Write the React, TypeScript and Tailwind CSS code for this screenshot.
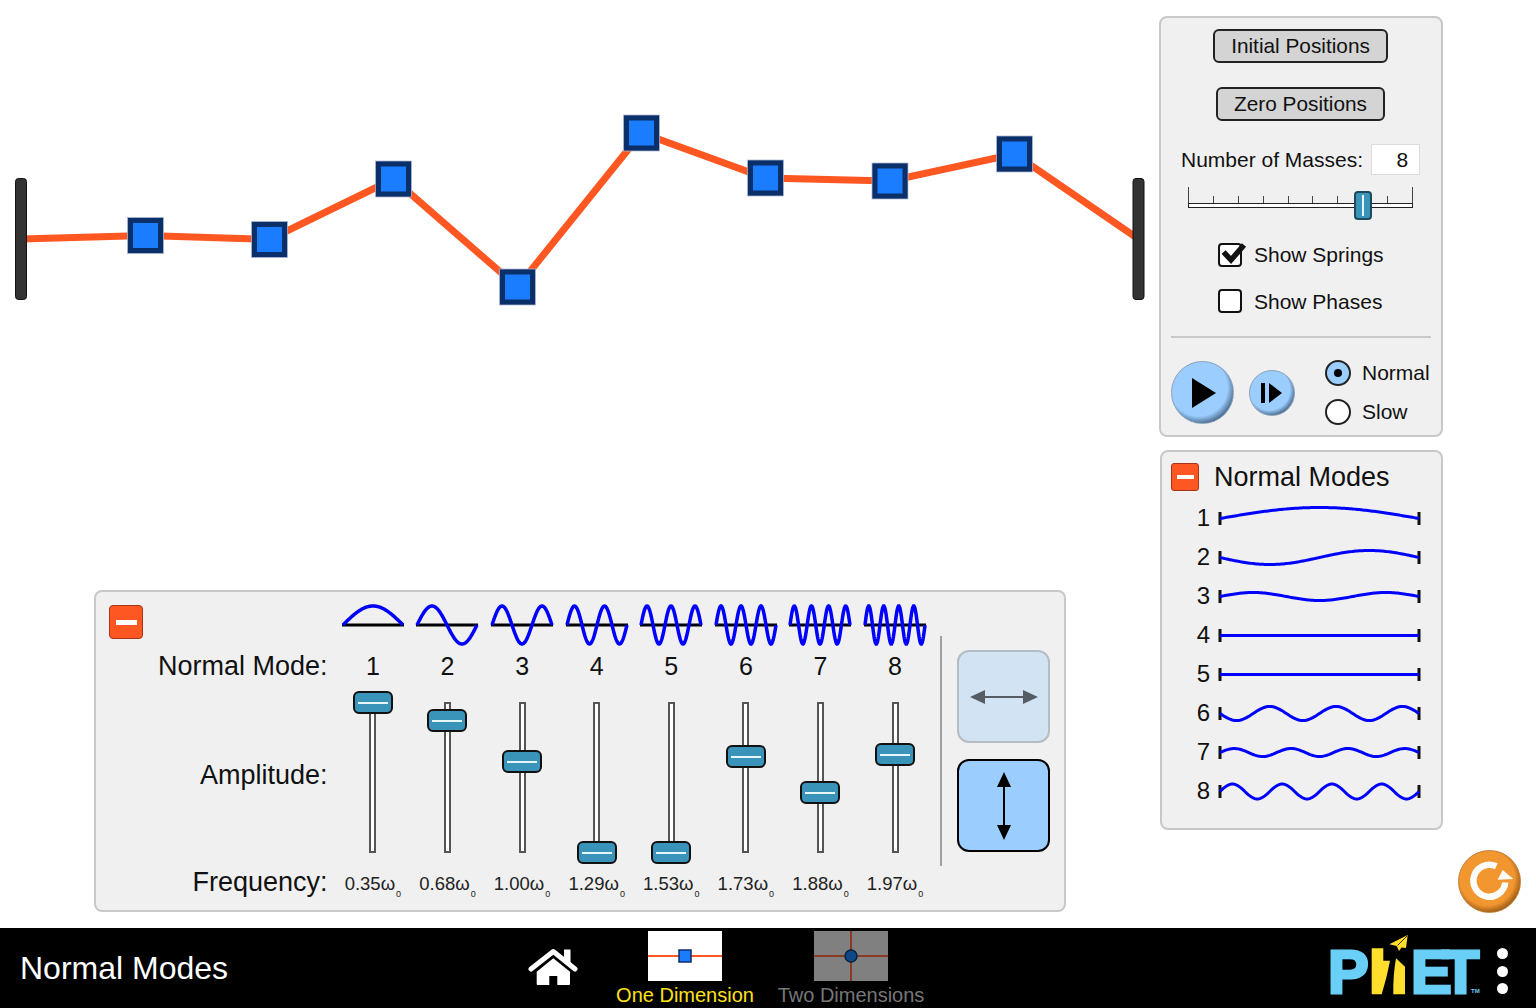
import clsx from "clsx";

const masses = [
  [145.5, 235.5],
  [269.5, 239.5],
  [393.5, 179],
  [517.5, 287],
  [641.5, 133],
  [765.5, 178],
  [890, 181],
  [1014.5, 154],
];

const modes = [
  { n: 1, freq: "0.35", thumb: 0 },
  { n: 2, freq: "0.68", thumb: 18 },
  { n: 3, freq: "1.00", thumb: 59 },
  { n: 4, freq: "1.29", thumb: 150 },
  { n: 5, freq: "1.53", thumb: 150 },
  { n: 6, freq: "1.73", thumb: 54 },
  { n: 7, freq: "1.88", thumb: 90 },
  { n: 8, freq: "1.97", thumb: 52 },
];

// amplitude of each mode in the little list on the right, negative dips first
const listAmps = [11, -7, 4, 0, 0, -7, 4, 7.5];

function wavePath(mode: number, width: number, amp: number, x0: number, y0: number) {
  const pts: string[] = [];
  for (let i = 0; i <= 120; i++) {
    const t = i / 120;
    const y = y0 - amp * Math.sin(mode * Math.PI * t);
    pts.push(`${(x0 + t * width).toFixed(2)},${y.toFixed(2)}`);
  }
  return "M" + pts.join("L");
}

function MinusButton({ size }: { size: "sm" | "lg" }) {
  return (
    <div
      className={clsx(
        "flex items-center justify-center border border-[#a8341a] bg-[#ff5722]",
        size === "lg" ? "h-[34px] w-[34px] rounded-[4px]" : "h-[28px] w-[28px] rounded-[3px]",
      )}
    >
      <div className={clsx("bg-white", size === "lg" ? "h-[5px] w-[21px]" : "h-[4px] w-[17px]")} />
    </div>
  );
}

function Chain() {
  const line = [[21, 239], ...masses, [1138.5, 239]].map((p) => p.join(",")).join(" ");
  return (
    <svg width="1159" height="330" className="block">
      <polyline points={line} fill="none" stroke="#ff5722" strokeWidth="7" />
      <rect x="15.5" y="178.5" width="11" height="121" rx="3" fill="#333" stroke="#111" />
      <rect x="1133" y="178.5" width="11" height="121" rx="3" fill="#333" stroke="#111" />
      {masses.map(([x, y]) => (
        <g key={x}>
          <rect x={x - 18} y={y - 18} width="36" height="36" fill="#0b2f68" stroke="#aebbd6" strokeWidth="0.75" />
          <rect x={x - 12.5} y={y - 12.5} width="25" height="25" fill="#1a7cff" />
        </g>
      ))}
    </svg>
  );
}

function ModeSlider({ top }: { top: number }) {
  return (
    <div className="relative mx-auto mt-[20px] h-[151px] w-[7px] border-2 border-[#555] bg-white">
      <div
        className="absolute left-[-18.5px] flex h-[23px] w-[40px] items-center justify-center rounded-[6px] border-2 border-[#111] bg-[#3a93b9]"
        style={{ top: top - 13 }}
      >
        <div className="h-[2px] w-[30px] bg-[#e6f6fb]" />
      </div>
    </div>
  );
}

function AmplitudePanel() {
  return (
    <div className="ml-[94px] mt-[260px] flex h-[322px] w-[972px] rounded-[8px] border-2 border-[#c8c8c8] bg-[#f0f0f0]">
      <div className="grid w-[837px] grid-cols-[239.6px_repeat(8,74.6px)] grid-rows-[58px_32px_184px_32px]">
        <div className="pl-[13px] pt-[13px]">
          <MinusButton size="lg" />
        </div>
        {modes.map((m) => (
          <div key={m.n} className="flex justify-center pt-[12px]">
            <svg width="66" height="44" className="block">
              <path d="M2 21H64" stroke="#000" strokeWidth="3" fill="none" />
              <path d={wavePath(m.n, 60, 19, 3, 21)} stroke="#0000ff" strokeWidth="3.5" fill="none" />
            </svg>
          </div>
        ))}

        <div className="flex items-center justify-end pr-[8px] text-[27px]">Normal Mode:</div>
        {modes.map((m) => (
          <div key={m.n} className="flex items-center justify-center pt-[2px] text-[25px]">
            {m.n}
          </div>
        ))}

        <div className="flex items-center justify-end pr-[8px] pt-[2px] text-[27px]">Amplitude:</div>
        {modes.map((m) => (
          <div key={m.n}>
            <ModeSlider top={m.thumb} />
          </div>
        ))}

        <div className="flex items-center justify-end pr-[8px] text-[27px]">Frequency:</div>
        {modes.map((m) => (
          <div key={m.n} className="flex items-center justify-center pt-[3px] text-[18.5px] text-[#222]">
            <span>
              {m.freq}ω<sub className="bottom-[-7px] ml-px text-[9px]">0</sub>
            </span>
          </div>
        ))}
      </div>

      <div className="ml-[7px] mt-[44px] h-[230px] w-[2px] bg-[#a0a0a0]" />

      <div className="ml-[15px] mt-[58px] flex flex-col gap-[16px]">
        <div className="flex h-[93px] w-[93px] items-center justify-center rounded-[12px] border-2 border-[#b4bcc4] bg-[#d2e3f3]">
          <svg width="70" height="20">
            <path d="M1 10L16 3V17Z M69 10L54 3V17Z" fill="#555c63" />
            <path d="M14 10H56" stroke="#555c63" strokeWidth="2" />
          </svg>
        </div>
        <div className="flex h-[93px] w-[93px] items-center justify-center rounded-[12px] border-2 border-black bg-[#9ccdff]">
          <svg width="20" height="70">
            <path d="M10 1L3 16H17Z M10 69L3 54H17Z" fill="#000" />
            <path d="M10 14V56" stroke="#000" strokeWidth="2" />
          </svg>
        </div>
      </div>
    </div>
  );
}

function CheckRow({ label, checked, gap }: { label: string; checked?: boolean; gap: string }) {
  return (
    <div className={clsx("ml-[57px] flex h-[24px] items-center", gap)}>
      <div className="relative h-[24px] w-[24px] rounded-[4px] border-2 border-[#111] bg-white">
        {checked && (
          <svg width="30" height="26" className="absolute left-0 top-[-5px]">
            <path d="M3.6 12L11 20L24 5" fill="none" stroke="#111" strokeWidth="5.5" />
          </svg>
        )}
      </div>
      <span className={clsx("text-[21px]", !checked && "mt-[2px]")}>{label}</span>
    </div>
  );
}

function Radio({ label, selected }: { label: string; selected?: boolean }) {
  return (
    <div className="flex h-[26px] items-center gap-[11px]">
      <div
        className={clsx(
          "flex h-[26px] w-[26px] items-center justify-center rounded-full border-2 border-[#222]",
          selected ? "bg-[#9ccdff]" : "bg-white",
        )}
      >
        {selected && <div className="h-[8px] w-[8px] rounded-full bg-black" />}
      </div>
      <span className="text-[21px]">{label}</span>
    </div>
  );
}

function ControlPanel() {
  const ticks = [0, 1, 2, 3, 4, 5, 6, 7, 8, 9];
  return (
    <div className="flex h-[421px] w-[284px] flex-col rounded-[8px] border-2 border-[#c8c8c8] bg-[#f0f0f0]">
      <div className="ml-[52px] mt-[11px] flex h-[34px] w-[175px] items-center justify-center rounded-[6px] border-2 border-[#222] bg-[#d4d4d4] text-[20.8px]">
        Initial Positions
      </div>
      <div className="ml-[55px] mt-[24px] flex h-[34px] w-[169px] items-center justify-center rounded-[6px] border-2 border-[#222] bg-[#d4d4d4] text-[20.8px]">
        Zero Positions
      </div>

      <div className="ml-[20px] mt-[23px] flex h-[31px] items-center gap-[8px]">
        <span className="text-[21px]">Number of Masses:</span>
        <div className="flex h-[31px] w-[49px] items-center justify-end border border-[#dcdcdc] bg-white pr-[11px] text-[21px]">
          8
        </div>
      </div>

      <div className="relative ml-[27px] mt-[12px] h-[21px] w-[225px]">
        <div className="flex h-[16px] items-end justify-between">
          {ticks.map((t) => (
            <div key={t} className={clsx("w-px bg-[#444]", t === 0 || t === 9 ? "h-[16px]" : "h-[7px]")} />
          ))}
        </div>
        <div className="h-[5px] border border-[#222] bg-white" />
        <div className="absolute left-[166px] top-[4px] flex h-[29px] w-[18px] items-center justify-center rounded-[4px] border-2 border-[#1d4a5c] bg-[#3a93b9]">
          <div className="h-[21px] w-[2px] bg-[#e6f6fb]" />
        </div>
      </div>

      <div className="mt-[35px]">
        <CheckRow label="Show Springs" checked gap="gap-[12px]" />
      </div>
      <div className="mt-[22px]">
        <CheckRow label="Show Phases" gap="gap-[12px]" />
      </div>

      <div className="mx-[10px] mt-[23px] h-[2px] bg-[#c8c8c8]" />

      <div className="flex">
        <div className="ml-[10px] mt-[23px] flex h-[63px] w-[63px] items-center justify-center rounded-full border border-[#8aa2ba] bg-[radial-gradient(circle_at_44%_42%,#9ccdff_0%,#9ccdff_58%,#3f5f80_76%)]">
          <svg width="26" height="32" className="ml-[3px]">
            <path d="M1 1L25 16L1 31Z" fill="#000" />
          </svg>
        </div>
        <div className="ml-[15px] mt-[32px] flex h-[46px] w-[46px] items-center justify-center rounded-full border border-[#8aa2ba] bg-[radial-gradient(circle_at_44%_42%,#9ccdff_0%,#9ccdff_58%,#3f5f80_76%)]">
          <svg width="22" height="20">
            <rect x="0" y="0" width="4" height="20" fill="#000" />
            <path d="M8 0L21 10L8 20Z" fill="#000" />
          </svg>
        </div>
        <div className="ml-[30px] mt-[22px] flex flex-col gap-[13px]">
          <Radio label="Normal" selected />
          <Radio label="Slow" />
        </div>
      </div>
    </div>
  );
}

function ModesList() {
  return (
    <div className="ml-px mt-[13px] h-[380px] w-[283px] rounded-[8px] border-2 border-[#c8c8c8] bg-[#f0f0f0]">
      <div className="ml-[9px] mt-[11px] flex items-center gap-[15px]">
        <MinusButton size="sm" />
        <span className="text-[27px] leading-[28px]">Normal Modes</span>
      </div>
      <div className="mt-[7.5px]">
        {modes.map((m, i) => (
          <div key={m.n} className="flex h-[39px] items-center">
            <div className="w-[48px] text-right text-[24px]">{m.n}</div>
            <svg width="206" height="39" className="ml-[7px] block">
              <path d="M3 13V26 M202 13V26" stroke="#111" strokeWidth="3" />
              <path d={wavePath(m.n, 199, listAmps[i], 3, 19.5)} fill="none" stroke="#0000ff" strokeWidth="3" />
            </svg>
          </div>
        ))}
      </div>
    </div>
  );
}

function ResetButton() {
  return (
    <div className="flex h-[63px] w-[63px] items-center justify-center rounded-full border border-[#c08038] bg-[radial-gradient(circle_at_46%_44%,#f2962f_0%,#f2962f_58%,#8f5412_76%)]">
      <svg width="50" height="50" viewBox="-25 -25 50 50">
        <path d="M6.3 -15.7A16 16 0 1 0 15.3 0.5" fill="none" stroke="#fff" strokeWidth="6.5" />
        <path d="M12.7 -12L23.3 -3L7.7 -2.3Z" fill="#fff" />
      </svg>
    </div>
  );
}

function HomeIcon() {
  return (
    <svg width="50" height="40" viewBox="0 0 50 40" className="block">
      <path d="M3 21L25.3 3.5L47 21" fill="none" stroke="#fff" strokeWidth="5" strokeLinecap="round" strokeLinejoin="round" />
      <rect x="36" y="1.5" width="6.5" height="14" fill="#fff" />
      <path d="M25.3 10.3L42 23.7V36Q42 37 41 37H29.3V28H21.3V37H9.7Q8.7 37 8.7 36V23.7Z" fill="#fff" />
    </svg>
  );
}

function PhetLogo() {
  return (
    <svg width="158" height="72" className="block">
      <path d="M81.7 0L63.3 9.3L70.7 11L73 16L75.5 12.5L80 13Z" fill="#ffde2e" />
      <path d="M71.5 10.5L81 1" stroke="#000" strokeWidth="0.8" />
      <text x="2" y="57.5" fontFamily="Liberation Sans" fontWeight="700" fontSize="61" fill="#6acff6" stroke="#6acff6" strokeWidth="3">
        P
      </text>
      {/* the h of the logo is a mark with a road through it, so shapes rather than a letter */}
      <path d="M45.7 13.3H57.3V25.7H64Q61 42 55.7 59.3H45.7Z" fill="#ffde2e" />
      <path d="M70 23.3L79 31.7V59.3H67.3Q67 40 70 23.3Z" fill="#ffde2e" />
      <text x="85" y="57.5" letterSpacing="-9.7" fontFamily="Liberation Sans" fontWeight="700" fontSize="61" fill="#6acff6" stroke="#6acff6" strokeWidth="3">
        ET
      </text>
      <text x="145" y="58" fontFamily="Liberation Sans" fontWeight="700" fontSize="6" fill="#6acff6">
        TM
      </text>
    </svg>
  );
}

function NavBar() {
  return (
    <div className="flex h-[80px] items-start bg-black">
      <div className="flex h-[80px] w-[528px] items-center pl-[20px] text-[32px] text-white">Normal Modes</div>
      <div className="mt-[20px]">
        <HomeIcon />
      </div>
      <div className="ml-[32px] flex w-[150px] flex-col items-center pt-[3px]">
        <svg width="74" height="50" className="block">
          <rect width="74" height="50" fill="#fff" />
          <path d="M0 25H74" stroke="#ff5722" strokeWidth="2" />
          <rect x="31" y="19" width="12" height="12" fill="#1a7cff" stroke="#0b2f68" strokeWidth="1.5" />
        </svg>
        <span className="mt-[2px] text-[20px] leading-[24px] text-[#ffe21a]">One Dimension</span>
      </div>
      <div className="ml-[16px] flex w-[150px] flex-col items-center pt-[3px]">
        <svg width="74" height="50" className="block">
          <rect width="74" height="50" fill="#808080" />
          <path d="M0 25H74M37 0V50" stroke="#8a3a22" strokeWidth="2" />
          <circle cx="37" cy="25" r="6" fill="#0d4785" stroke="#0a2240" strokeWidth="1.5" />
        </svg>
        <span className="mt-[2px] text-[20px] leading-[24px] text-[#777]">Two Dimensions</span>
      </div>
      <div className="ml-[400px] mt-[7px]">
        <PhetLogo />
      </div>
      <div className="ml-[13px] mt-[20px] flex flex-col gap-[6.5px]">
        <div className="h-[11px] w-[11px] rounded-full bg-white" />
        <div className="h-[11px] w-[11px] rounded-full bg-white" />
        <div className="h-[11px] w-[11px] rounded-full bg-white" />
      </div>
    </div>
  );
}

export default function App() {
  return (
    <div className="h-[1008px] w-[1536px] overflow-hidden bg-white font-['Liberation_Sans',Arial,sans-serif] text-[#111]">
      <div className="flex h-[928px]">
        <div className="w-[1159px]">
          <Chain />
          <AmplitudePanel />
        </div>
        <div className="w-[284px] pt-[16px]">
          <ControlPanel />
          <ModesList />
        </div>
        <div className="flex flex-1 items-end justify-end pb-[15px] pr-[15px]">
          <ResetButton />
        </div>
      </div>
      <NavBar />
    </div>
  );
}
